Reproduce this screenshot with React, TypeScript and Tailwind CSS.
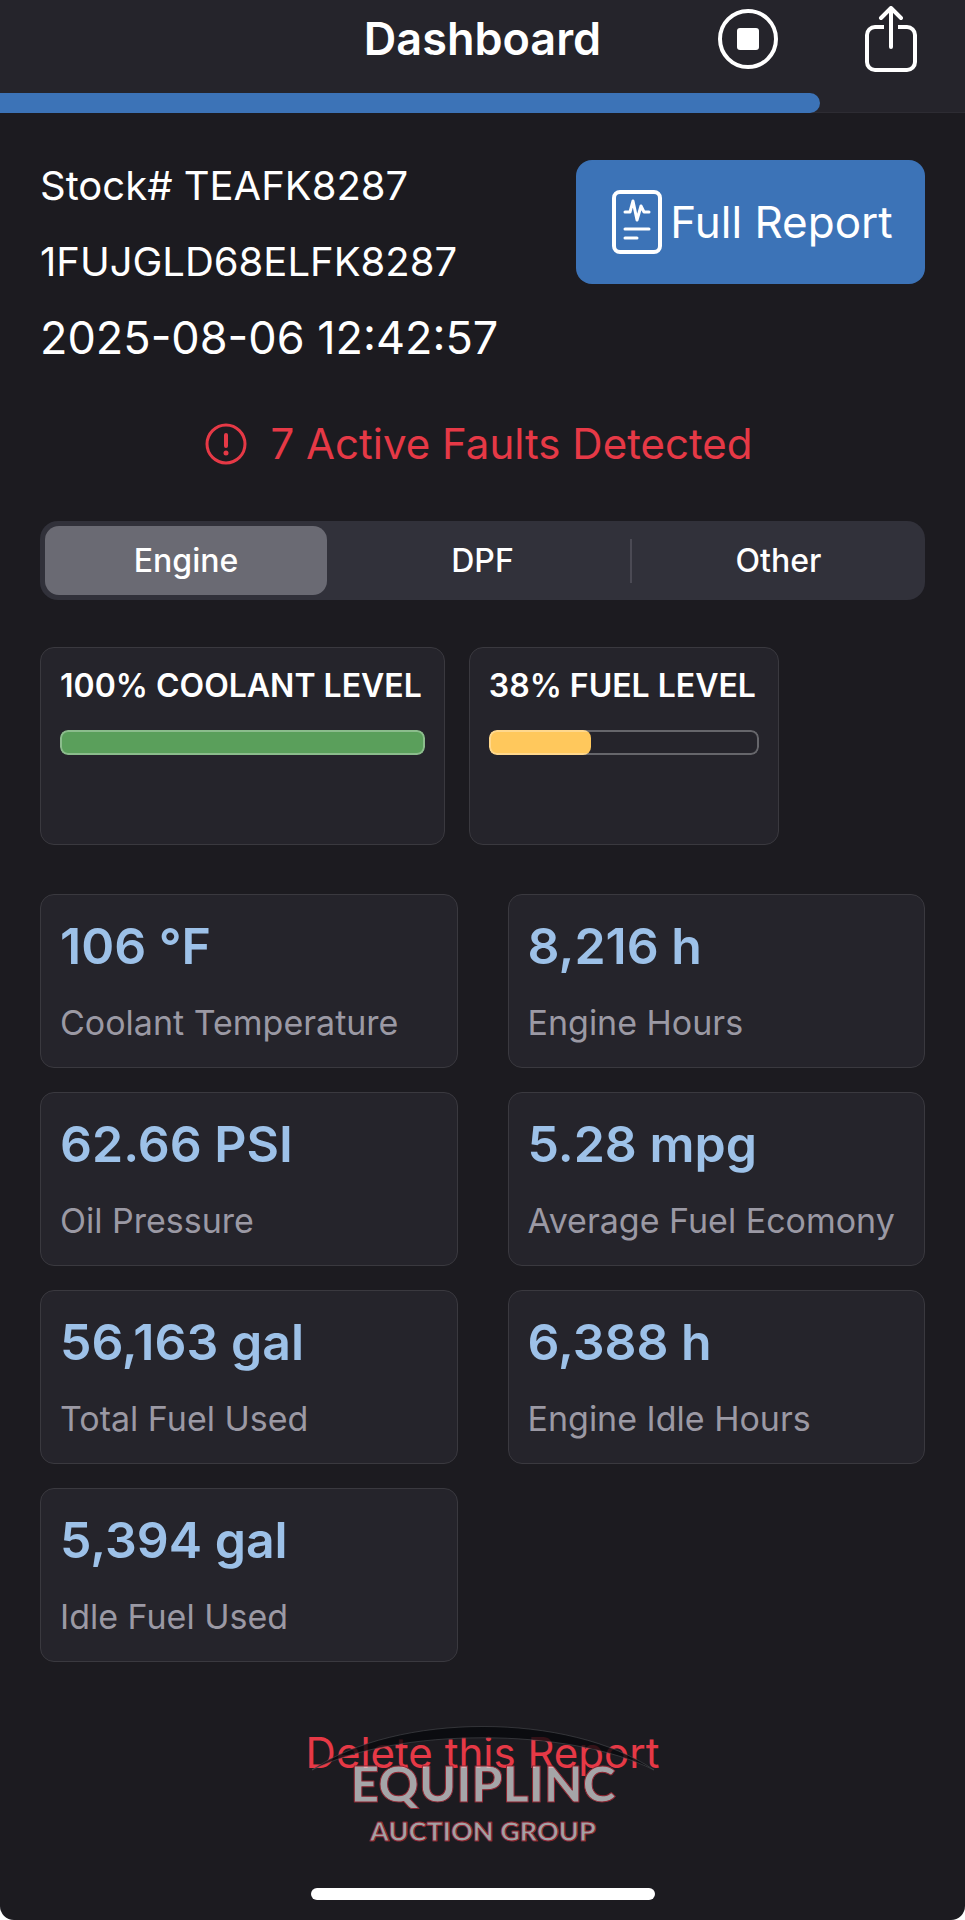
import { useState } from 'react';

const tabs = ['Engine', 'DPF', 'Other'];

const levels = [
  { label: '100% COOLANT LEVEL', value: 100, fill: 'bg-[#5a9f5b]' },
  { label: '38% FUEL LEVEL', value: 38, fill: 'bg-[#ffc85c]' },
];

const metrics = [
  { value: '106 °F', label: 'Coolant Temperature' },
  { value: '8,216 h', label: 'Engine Hours' },
  { value: '62.66 PSI', label: 'Oil Pressure' },
  { value: '5.28 mpg', label: 'Average Fuel Ecomony' },
  { value: '56,163 gal', label: 'Total Fuel Used' },
  { value: '6,388 h', label: 'Engine Idle Hours' },
  { value: '5,394 gal', label: 'Idle Fuel Used' },
];

function StopIcon() {
  return (
    <svg width="60" height="60" viewBox="0 0 60 60" fill="none" aria-hidden="true">
      <circle cx="30" cy="30" r="28" stroke="white" strokeWidth="4" />
      <rect x="19" y="19" width="22" height="22" rx="3" fill="white" />
    </svg>
  );
}

function ShareIcon() {
  return (
    <svg width="52" height="66" viewBox="0 0 52 66" fill="none" stroke="white" strokeWidth="4" strokeLinejoin="round" aria-hidden="true">
      <path d="M19 21h-9a8 8 0 0 0-8 8v27a8 8 0 0 0 8 8h32a8 8 0 0 0 8-8V29a8 8 0 0 0-8-8h-9" />
      <path d="M26 41V3M16 12L26 2l10 10" strokeLinecap="round" />
    </svg>
  );
}

function ReportIcon() {
  return (
    <svg width="50" height="64" viewBox="0 0 50 64" fill="none" stroke="white" strokeLinecap="round" strokeLinejoin="round" aria-hidden="true">
      <rect x="2" y="2" width="46" height="60" rx="6" strokeWidth="4" />
      <path d="M13 22h5l3-11 4 19 4-14 3 6h5" strokeWidth="3" />
      <path d="M13 39h24M13 48h12" strokeWidth="3" />
    </svg>
  );
}

function AlertIcon() {
  return (
    <svg width="42" height="42" viewBox="0 0 42 42" fill="none" aria-hidden="true">
      <circle cx="21" cy="21" r="19" stroke="#e63946" strokeWidth="3" />
      <path d="M21 12v11" stroke="#e63946" strokeWidth="4" strokeLinecap="round" />
      <circle cx="21" cy="30" r="2.5" fill="#e63946" />
    </svg>
  );
}

function Watermark() {
  return (
    <svg className="absolute left-1/2 top-1 -translate-x-1/2 pointer-events-none" width="342" height="122" viewBox="0 0 342 122">
      <path d="M0 44C85-14 257-14 342 44C257 1 85 1 0 44Z" fill="#08090c" fillOpacity="0.8" stroke="#55565a" strokeWidth="0.5" />
      <g fill="#e0e0e2" fillOpacity="0.7" stroke="#8f2430" strokeLinejoin="round" textAnchor="middle" fontFamily="Lato, sans-serif" fontWeight="900">
        <text x="171" y="76" fontSize="50" strokeWidth="1">EQUIPLINC</text>
        <text x="171" y="115" fontSize="27" strokeWidth="1">AUCTION GROUP</text>
      </g>
    </svg>
  );
}

export default function App() {
  const [active, setActive] = useState('Engine');

  return (
    <div className="min-h-screen bg-[#1c1b20] text-white rounded-b-[14px] font-['Inter',sans-serif]">
      <header className="bg-[#25242b]">
        <div className="grid grid-cols-[1fr_auto_1fr] items-center h-[93px] pb-4 px-12">
          <h1 className="col-start-2 text-[45px] leading-none font-semibold">Dashboard</h1>
          <div className="flex justify-end items-center gap-[87px]">
            <button type="button" aria-label="Stop" className="cursor-pointer"><StopIcon /></button>
            <button type="button" aria-label="Share" className="cursor-pointer"><ShareIcon /></button>
          </div>
        </div>
        <div className="h-5 border-b border-[#2d2c33]">
          <div className="h-5 w-[85%] bg-[#3c73b7] rounded-r-full" />
        </div>
      </header>

      <main className="px-10 pt-[47px]">
        <div className="flex justify-between items-start">
          <div className="leading-[76px] -mt-3 whitespace-nowrap">
            <p className="text-[40px]">Stock# TEAFK8287</p>
            <p className="text-[40px]">1FUJGLD68ELFK8287</p>
            <p className="text-[45px]">2025-08-06 12:42:57</p>
          </div>
          <button type="button" className="flex items-center justify-center gap-2 w-[349px] h-[124px] pl-1 bg-[#3c73b7] rounded-2xl text-[44px] whitespace-nowrap cursor-pointer">
            <ReportIcon />
            Full Report
          </button>
        </div>

        <p className="mt-8 pr-2 flex items-center justify-center gap-6 text-[42px] leading-[72px] text-[#e63946]">
          <AlertIcon />
          7 Active Faults Detected
        </p>

        <div role="tablist" className="mt-[41px] flex items-center h-[79px] rounded-[18px] bg-[#31313a]">
          {tabs.map((tab, i) => (
            <div key={tab} className="flex-1 flex items-center h-full">
              {i > 0 && active !== tab && active !== tabs[i - 1] && <span className="w-0.5 h-11 bg-[#4b4a54]" />}
              <button
                type="button"
                role="tab"
                aria-selected={active === tab}
                onClick={() => setActive(tab)}
                className={`flex-1 h-[69px] rounded-[14px] text-[32px] font-medium cursor-pointer ${active === tab ? 'ml-[5px] mr-2 bg-[#6a6a73]' : ''}`}>
                {tab}
              </button>
            </div>
          ))}
        </div>

        <div className="mt-[47px] flex gap-6">
          {levels.map((level) => (
            <div key={level.label} className="h-[198px] px-[19px] pt-4 rounded-[14px] border border-[#3a393f] bg-[#25242b]">
              <p className="pr-[3px] text-[32px] leading-[44px] font-semibold whitespace-nowrap">{level.label}</p>
              <div className="relative mt-[22px] h-[25px] rounded-lg overflow-hidden">
                <div className={`h-full rounded-lg ${level.fill}`} style={{ width: `${level.value}%` }} />
                <div className="absolute inset-0 rounded-lg border-2 border-white/30" />
              </div>
            </div>
          ))}
        </div>

        <div className="mt-[49px] grid grid-cols-2 gap-x-[50px] gap-y-6">
          {metrics.map((metric) => (
            <div key={metric.label} className="h-[174px] px-[19px] pt-[17px] rounded-[14px] border border-[#3a393f] bg-[#25242b]">
              <p className="text-[50px] leading-[68px] font-semibold text-[#9dc1e8]">{metric.value}</p>
              <p className="mt-[9px] text-[34px] leading-[68px] text-[#9b99a4] whitespace-nowrap">{metric.label}</p>
            </div>
          ))}
        </div>

        <div className="relative mt-[60px] flex justify-center pb-[104px]">
          <button type="button" className="text-[42px] leading-[62px] text-[#e63946] cursor-pointer">Delete this Report</button>
          <Watermark />
        </div>
      </main>

      <div className="mx-auto w-[344px] h-3 rounded-full bg-white" />
    </div>
  );
}
